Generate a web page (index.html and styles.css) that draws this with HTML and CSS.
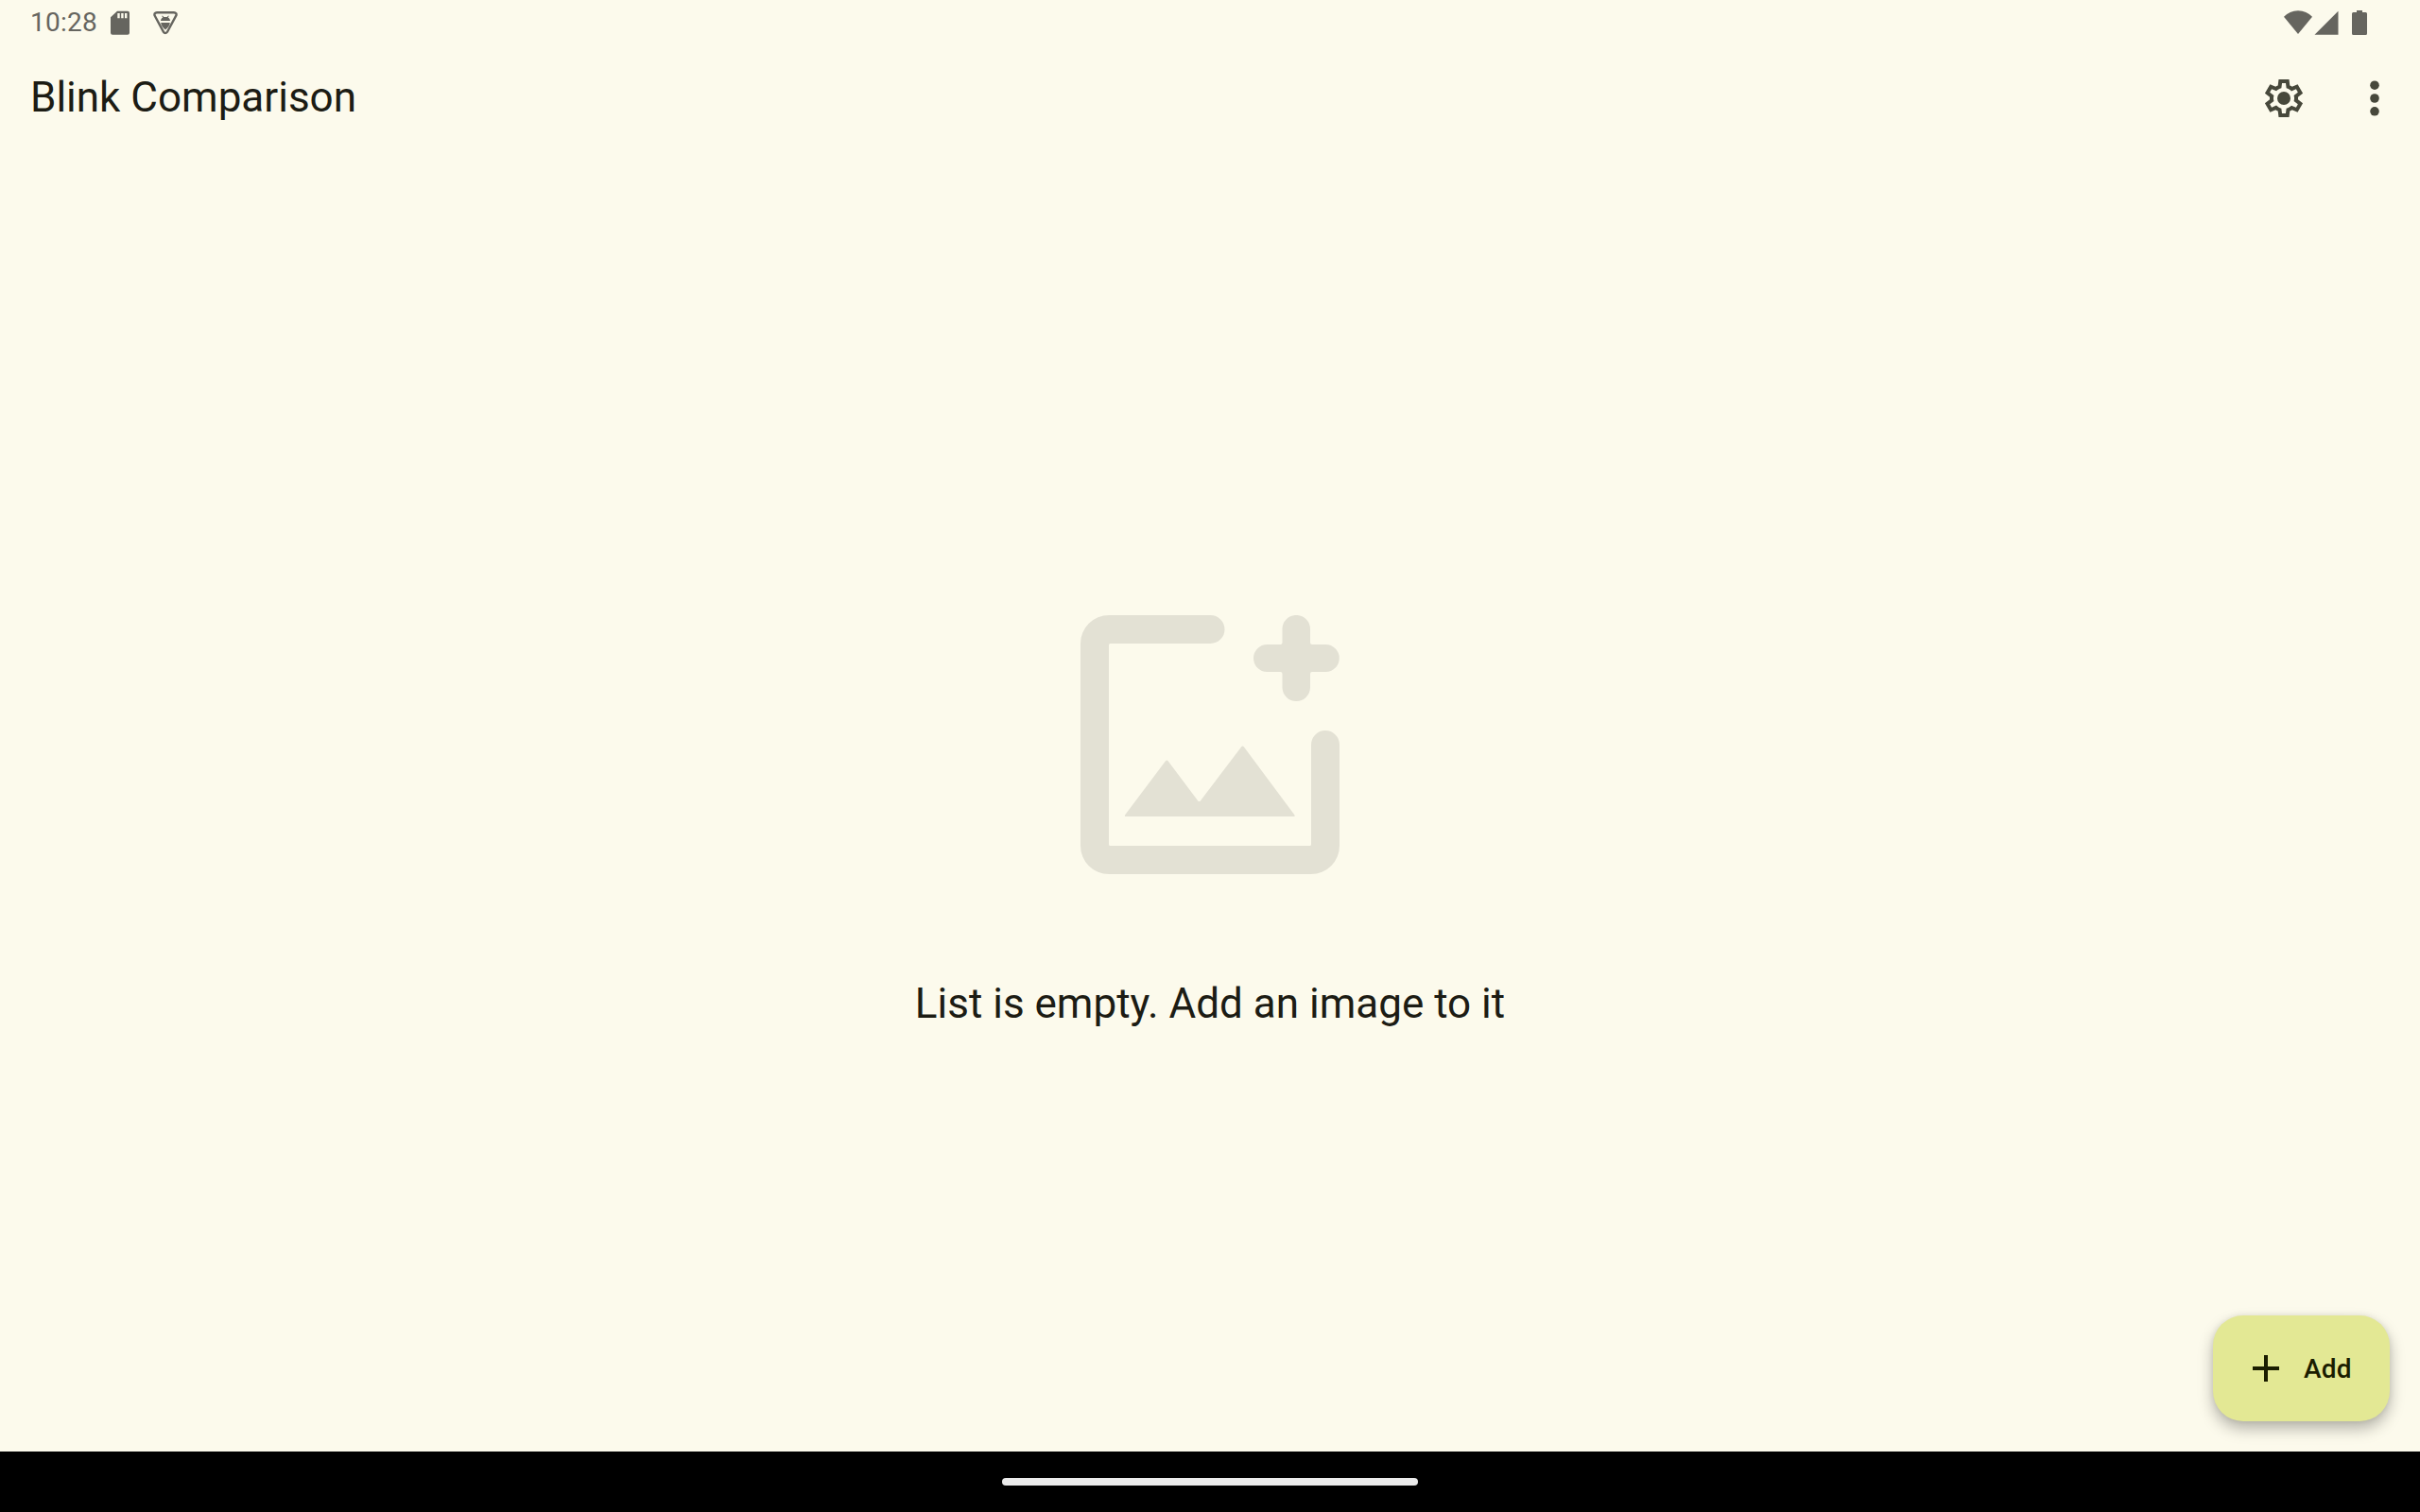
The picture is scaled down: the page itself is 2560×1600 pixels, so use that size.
FILE: index.html
```html
<!DOCTYPE html>
<html lang="en">
<head>
<meta charset="utf-8">
<title>Blink Comparison</title>
<link rel="stylesheet" href="styles.css">
</head>
<body>
<div class="screen">
  <header class="status-bar">
    <div class="status-left">
      <span class="clock">10:28</span>
      <svg class="sd-icon" viewBox="0 0 20 26"><path fill-rule="evenodd" d="M7 .7h11a2 2 0 0 1 2 2v21a2 2 0 0 1-2 2H2a2 2 0 0 1-2-2V7.300zM7.300 3v5.200h2.400V3zM11.200 3v5.200h2.400V3zM15 3v5.200h2.400V3z"/></svg>
      <svg class="debug-icon" viewBox="0 0 26 26">
        <path class="debug-outline" d="M4 2.200h18c2 0 3.200 1.700 2.200 3.500L15 22.800c-.9 1.600-3.100 1.600-4 0L1.800 5.700C.8 3.900 2 2.200 4 2.200z"/>
        <path d="M8 11h10c0-1.700-.9-3-2.300-3.600L16.800 6l-.7-.6-1.500 1.600h-3.200L9.900 5.400l-.7.6 1.100 1.400C8.900 8 8 9.300 8 11zM8.200 13h9.600c-.2 2.800-2 5.400-4.800 7.500-2.800-2.100-4.600-4.700-4.800-7.500z"/>
      </svg>
    </div>
    <div class="status-right">
      <svg class="wifi-icon" viewBox="0 0 30 26"><path d="M0 6.700C4 2.600 9 .3 15 .3s11 2.300 15 6.400L15 25z"/></svg>
      <svg class="signal-icon" viewBox="0 0 26 26"><path d="M25.500.7v25H.5z"/></svg>
      <svg class="battery-icon" viewBox="0 0 16 26"><path d="M5 0h6v2h3.500A1.500 1.500 0 0 1 16 3.500v21a1.500 1.500 0 0 1-1.500 1.500h-13A1.500 1.500 0 0 1 0 24.500v-21A1.500 1.500 0 0 1 1.500 2H5z"/></svg>
    </div>
  </header>
  <nav class="app-bar">
    <h1 class="title">Blink Comparison</h1>
    <div class="actions">
      <svg class="action-icon" viewBox="0 0 24 24"><path fill-rule="evenodd" d="m9.250 22-.4-3.200q-.325-.125-.612-.3-.288-.175-.563-.375L4.700 19.375l-2.750-4.750 2.575-1.950Q4.500 12.500 4.500 12.337v-.675q0-.162.025-.337L1.950 9.375l2.750-4.750 2.975 1.250q.275-.2.575-.375.3-.175.6-.3l.4-3.200h5.500l.4 3.200q.325.125.613.3.287.175.562.375l2.975-1.250 2.750 4.750-2.575 1.950q.025.175.025.337v.675q0 .163-.05.338l2.575 1.950-2.750 4.750-2.950-1.250q-.275.2-.575.375-.3.175-.6.3l-.4 3.200ZM11 20h1.975l.35-2.650q.775-.2 1.438-.587.662-.388 1.212-.938l2.475 1.025.975-1.700-2.150-1.625q.125-.35.175-.737.05-.388.05-.788t-.05-.787q-.05-.388-.175-.738l2.150-1.625-.975-1.700-2.475 1.050q-.55-.575-1.212-.963-.663-.387-1.438-.587L13 4h-1.975l-.35 2.650q-.775.2-1.437.587-.663.388-1.213.938L5.550 7.150l-.975 1.700 2.150 1.600q-.125.375-.175.75-.05.375-.05.8 0 .4.05.775t.175.75l-2.150 1.625.975 1.700 2.475-1.050q.55.575 1.213.963.662.387 1.437.587Z"/><circle cx="12" cy="12" r="3.500"/></svg>
      <svg class="action-icon" viewBox="0 0 48 48"><circle cx="24" cy="10.200" r="4.800"/><circle cx="24" cy="24" r="4.800"/><circle cx="24" cy="37.800" r="4.800"/></svg>
    </div>
  </nav>
  <main class="content">
    <svg class="empty-icon" viewBox="0 0 274 274">
      <path d="M30 0h107.500a15 15 0 0 1 0 30H31.500a1.500 1.500 0 0 0-1.500 1.500V242.500a1.500 1.500 0 0 0 1.500 1.500H242.500a1.500 1.500 0 0 0 1.500-1.500V137a15 15 0 0 1 30 0V244a30 30 0 0 1-30 30H30a30 30 0 0 1-30-30V30A30 30 0 0 1 30 0z"/>
      <path d="M213.500 14.700a14.700 14.700 0 0 1 29.500 0V29a2 2 0 0 0 2 2h14.300a14.500 14.500 0 0 1 0 29H245a2 2 0 0 0-2 2v14.300a14.700 14.700 0 0 1-29.500 0V62a2 2 0 0 0-2-2h-14a14.500 14.500 0 0 1 0-29h14a2 2 0 0 0 2-2z"/>
      <path d="M47 211.500 90 154.300q1.300-1.500 2.600 0L124.300 196.500q1.300 1 2.600 0L170.200 139.200q1.300-1.500 2.600 0L226.500 211.500q.5 1.500-1 1.500H48q-1.500 0-1-1.500z"/>
    </svg>
    <p class="empty-text">List is empty. Add an image to it</p>
    <button class="fab">
      <svg class="plus-icon" viewBox="0 0 28 28"><path d="M12 0h4v12h12v4H16v12h-4V16H0v-4h12z"/></svg>
      <span class="fab-label">Add</span>
    </button>
  </main>
  <footer class="nav-bar"><div class="nav-handle"></div></footer>
</div>
</body>
</html>
```
FILE: styles.css
```css
* { box-sizing: border-box; }
body {
  margin: 0;
  background: #fcfaec;
  color: #1c1c14;
  font-family: Roboto, sans-serif;
}
svg { display: block; flex: none; }
.screen {
  display: flex;
  flex-direction: column;
  width: 2560px;
  height: 1600px;
  overflow: hidden;
}
.status-bar {
  display: flex;
  justify-content: space-between;
  height: 48px;
  padding: 11px 56px 0 32px;
  color: #66655f;
  fill: #66655f;
}
.status-left, .status-right { display: flex; align-items: flex-start; }
.clock {
  width: 70px;
  margin-right: 15px;
  font-size: 28px;
  line-height: 26px;
  letter-spacing: 0.25px;
  white-space: nowrap;
}
.sd-icon { width: 20px; height: 26px; }
.debug-icon { width: 26px; height: 26px; margin-left: 25px; }
.debug-outline { fill: none; stroke: #66655f; stroke-width: 2.4; }
.wifi-icon { width: 30px; height: 26px; }
.signal-icon { width: 26px; height: 26px; margin-left: 2px; }
.battery-icon { width: 16px; height: 26px; margin-left: 14px; }
.app-bar {
  display: flex;
  align-items: center;
  justify-content: space-between;
  height: 112px;
  padding: 0 24px 0 32px;
}
.title {
  margin: 0;
  padding-bottom: 2px;
  font-size: 44px;
  font-weight: 400;
  line-height: 56px;
}
.actions { display: flex; gap: 48px; fill: #47483b; }
.action-icon { width: 48px; height: 48px; }
.content {
  position: relative;
  display: flex;
  flex: 1;
  flex-direction: column;
  align-items: center;
  padding-top: 491px;
}
.empty-icon { width: 274px; height: 274px; fill: #e3e1d4; }
.empty-text { margin: 109px 0 0; font-size: 44px; line-height: 56px; }
.fab {
  position: absolute;
  right: 32px;
  bottom: 32px;
  display: flex;
  align-items: center;
  gap: 26px;
  width: 187px;
  height: 112px;
  padding: 0 0 0 42px;
  border: 0;
  border-radius: 32px;
  background: #e3e894;
  color: #1b1d00;
  fill: #1b1d00;
  font: 500 28px/40px Roboto, sans-serif;
  letter-spacing: 0.2px;
  box-shadow: 0 8px 16px rgba(0, 0, 0, 0.28), 0 0 6px rgba(0, 0, 0, 0.08);
}
.fab-label { padding-top: 2px; }
.plus-icon { width: 28px; height: 28px; }
.nav-bar {
  display: flex;
  align-items: flex-start;
  justify-content: center;
  height: 64px;
  padding-top: 28px;
  background: #000;
}
.nav-handle { width: 440px; height: 8px; border-radius: 4px; background: #ebebeb; }
```
